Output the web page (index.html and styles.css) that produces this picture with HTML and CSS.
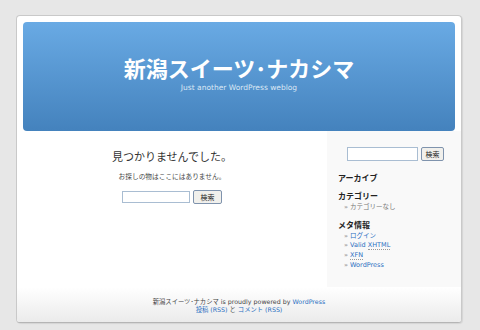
FILE: index.html
```html
<!DOCTYPE html>
<html>
<head>
  <meta charset="utf-8">
  <title>新潟スイーツ･ナカシマ</title>
  <link rel="stylesheet" href="styles.css">
</head>
<body>
  <div class="page">
    <div class="header">
      <h1>新潟スイーツ･ナカシマ</h1>
      <div class="description">Just another WordPress weblog</div>
    </div>
    <div class="columns">
      <div class="content">
        <h2>見つかりませんでした。</h2>
        <p>お探しの物はここにはありません。</p>
        <form class="searchform">
          <input type="text" class="search-text">
          <button type="button" class="search-btn">検索</button>
        </form>
      </div>
      <div class="sidebar">
        <form class="searchform side">
          <input type="text" class="search-text">
          <button type="button" class="search-btn">検索</button>
        </form>
        <h3 class="first">アーカイブ</h3>
        <h3>カテゴリー</h3>
        <ul>
          <li>カテゴリーなし</li>
        </ul>
        <h3>メタ情報</h3>
        <ul>
          <li><a href="#">ログイン</a></li>
          <li><a href="#">Valid <abbr>XHTML</abbr></a></li>
          <li><a href="#"><abbr>XFN</abbr></a></li>
          <li><a href="#">WordPress</a></li>
        </ul>
      </div>
    </div>
    <div class="footer">
      <p>新潟スイーツ･ナカシマ is proudly powered by <a href="#">WordPress</a><br>
      <a href="#">投稿 (RSS)</a> と <a href="#">コメント (RSS)</a></p>
    </div>
  </div>
  <div class="next-page"></div>
</body>
</html>
```

FILE: styles.css
```css
body {
  margin: 0;
  padding-top: 15px;
  background: #e7e7e7;
  font-family: "DejaVu Sans", "Noto Sans CJK JP", sans-serif;
  color: #333;
  overflow: hidden;
}
.page {
  width: 444px;
  margin-left: 16px;
  background: #fff;
  border: 1px solid #c9c9c9;
  border-bottom-color: #b5b5b5;
  border-radius: 4px;
  box-shadow: 1px 1px 1px rgba(0, 0, 0, 0.08);
  overflow: hidden;
}
.header {
  margin: 6px 6px 0;
  height: 109px;
  border-radius: 4px;
  background: linear-gradient(#69aae4, #4482bd);
  color: #fff;
  text-align: center;
  box-sizing: border-box;
  padding-top: 30px;
}
.header h1 {
  margin: 0;
  font-family: "Noto Sans CJK JP", sans-serif;
  font-size: 22px;
  font-weight: bold;
  line-height: 30px;
}
.description {
  font-size: 7.5px;
  color: #dbe8f5;
  line-height: 11px;
}
.columns {
  display: flex;
}
.content {
  width: 310px;
  text-align: center;
  padding-top: 18px;
}
.content h2 {
  margin: 0;
  font-family: "Noto Sans CJK JP", sans-serif;
  font-size: 11px;
  font-weight: normal;
  line-height: 15px;
  color: #333;
}
.content p {
  margin: 7px 0 9px;
  font-family: "Noto Sans CJK JP", sans-serif;
  font-size: 6.7px;
  line-height: 10px;
  color: #444;
}
.searchform {
  display: flex;
  justify-content: center;
  align-items: center;
  gap: 3px;
  margin: 0;
}
.search-text {
  width: 68px;
  height: 12px;
  padding: 0;
  margin: 0;
  box-sizing: border-box;
  border: 1px solid #a9bdd2;
  background: #fff;
}
.search-btn {
  width: 29px;
  height: 14px;
  padding: 0;
  margin: 0;
  border: 1px solid #7f93ad;
  border-radius: 2px;
  background: #f1f0ec;
  font-family: "Noto Sans CJK JP", sans-serif;
  font-size: 7px;
  line-height: 12px;
  color: #222;
}
.sidebar {
  width: 134px;
  background: #f9f9f9;
  padding: 16px 0 16px 11px;
  box-sizing: border-box;
}
.searchform.side {
  justify-content: flex-start;
  margin-left: 9px;
}
.side .search-text {
  width: 71px;
  height: 14px;
}
.side .search-btn {
  width: 23px;
}
.sidebar h3 {
  margin: 7px 0 0;
  font-family: "Noto Sans CJK JP", sans-serif;
  font-size: 8px;
  font-weight: bold;
  line-height: 9px;
  color: #222;
}
.sidebar h3.first {
  margin-top: 12px;
}
.sidebar h3 + h3 {
  margin-top: 9px;
}
.sidebar ul {
  list-style: none;
  margin: 3px 0 0;
  padding: 0 0 0 6px;
}
.sidebar li {
  font-family: "DejaVu Sans", "Noto Sans CJK JP", sans-serif;
  font-size: 6.5px;
  line-height: 9.7px;
  color: #777;
}
.sidebar li::before {
  content: "» ";
  color: #888;
}
a {
  color: #2a6fc1;
  text-decoration: none;
}
abbr {
  text-decoration: none;
  border-bottom: 1px dotted #999;
}
.footer {
  height: 35px;
  background: linear-gradient(#fff, #ebebeb);
  text-align: center;
  box-sizing: border-box;
  padding-top: 11px;
}
.footer p {
  margin: 0;
  font-size: 6.3px;
  line-height: 8px;
  color: #444;
}
.next-page {
  width: 444px;
  height: 1px;
  margin: 8px 0 0 17px;
  background: #fff;
  border-top: 1px solid #d7d7d7;
}
```
